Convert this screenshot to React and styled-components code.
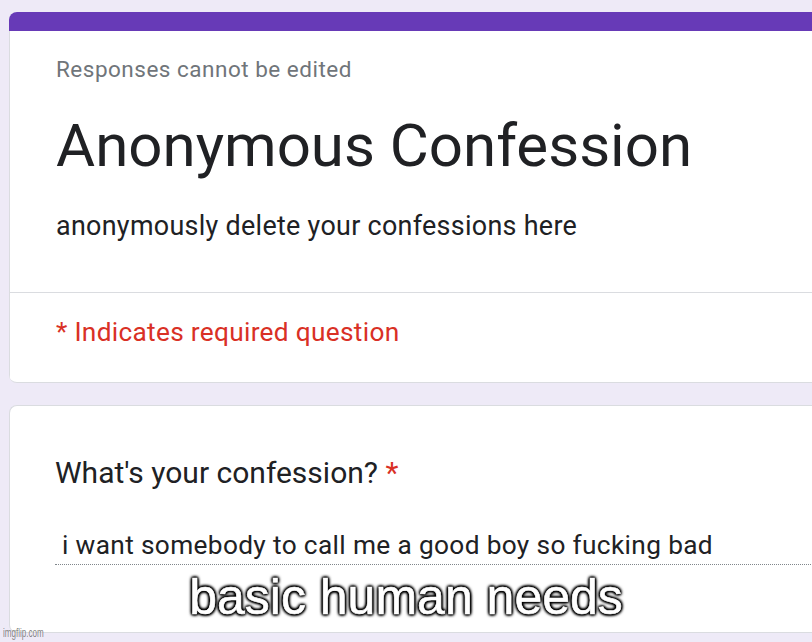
import React from "react";
import styled, { createGlobalStyle } from "styled-components";

const Global = createGlobalStyle`
  html, body { margin: 0; padding: 0; background: #eeeaf7; }
  body { font-family: Roboto, "Noto Sans", Arial, sans-serif; }
`;

const Page = styled.div`
  position: relative;
  width: 812px;
  height: 642px;
  overflow: hidden;
  background: #eeeaf7;
  padding: 12px 0 0 9px;
  box-sizing: border-box;
  display: flex;
  flex-direction: column;
  gap: 22px;
`;

const Card = styled.section`
  width: 860px;
  background: #fff;
  border: 1px solid #dadce0;
  border-right: none;
  border-radius: 8px 0 0 8px;
  overflow: hidden;
  flex-shrink: 0;
`;

const HeaderCard = styled(Card)`
  border-top: none;
  border-left: none;
`;

const TopBar = styled.div`
  height: 19px;
  background: #673ab7;
`;

const HeaderBody = styled.div`
  border-left: 1px solid #dadce0;
  display: flex;
  flex-direction: column;
`;

const HeaderMain = styled.div`
  padding: 24px 0 50px 46px;
  display: flex;
  flex-direction: column;
`;

const Meta = styled.div`
  font-size: 22.5px;
  line-height: 28px;
  letter-spacing: 0.5px;
  color: #70757a;
`;

const Title = styled.h1`
  margin: 28px 0 0;
  font-size: 60px;
  line-height: 70px;
  font-weight: 400;
  color: #202124;
`;

const Description = styled.p`
  margin: 29px 0 0;
  font-size: 26.9px;
  line-height: 32px;
  letter-spacing: 0.3px;
  color: #202124;
`;

const Divider = styled.hr`
  margin: 0;
  border: none;
  border-top: 1px solid #dadce0;
`;

const Required = styled.div`
  padding: 23px 0 34px 46px;
  font-size: 26.25px;
  line-height: 32px;
  letter-spacing: 0.3px;
  color: #d93025;
`;

const QuestionCard = styled(Card)`
  padding: 50px 0 67px 45px;
  box-sizing: border-box;
`;

const Question = styled.div`
  font-size: 30px;
  line-height: 34px;
  color: #202124;
`;

const Star = styled.span`
  color: #d93025;
`;

const Answer = styled.div`
  margin-top: 39px;
  padding: 0 0 3px 7px;
  border-bottom: 1px dotted #80868b;
  font-size: 26.25px;
  line-height: 32px;
  letter-spacing: 0.35px;
  color: #202124;
`;

const Caption = styled.div`
  position: absolute;
  left: 0;
  right: 0;
  top: 567px;
  text-align: center;
  font-family: "Liberation Sans", Arial, sans-serif;
  font-size: 50px;
  line-height: 60px;
  color: #fff;
  -webkit-text-stroke: 0.6px #fff;
  text-shadow: 0 0 1px #000, 0 0 2px #000, 0 0 3px #000, 0 0 4px #000,
    1px 1px 3px #000, -1px -1px 3px #000, 1px -1px 3px #000, -1px 1px 3px #000;
`;

const Watermark = styled.div`
  position: absolute;
  left: 3px;
  top: 626px;
  font-family: "Liberation Sans", Arial, sans-serif;
  font-size: 13px;
  line-height: 14px;
  color: rgba(110, 110, 110, 0.85);
  transform: scaleX(0.62);
  transform-origin: left center;
`;

export default function App() {
  return (
    <>
      <Global />
      <Page>
        <HeaderCard>
          <TopBar />
          <HeaderBody>
            <HeaderMain>
              <Meta>Responses cannot be edited</Meta>
              <Title>Anonymous Confession</Title>
              <Description>anonymously delete your confessions here</Description>
            </HeaderMain>
            <Divider />
            <Required>* Indicates required question</Required>
          </HeaderBody>
        </HeaderCard>
        <QuestionCard>
          <Question>
            What's your confession? <Star>*</Star>
          </Question>
          <Answer>i want somebody to call me a good boy so fucking bad</Answer>
        </QuestionCard>
        <Caption>basic human needs</Caption>
        <Watermark>imgflip.com</Watermark>
      </Page>
    </>
  );
}
